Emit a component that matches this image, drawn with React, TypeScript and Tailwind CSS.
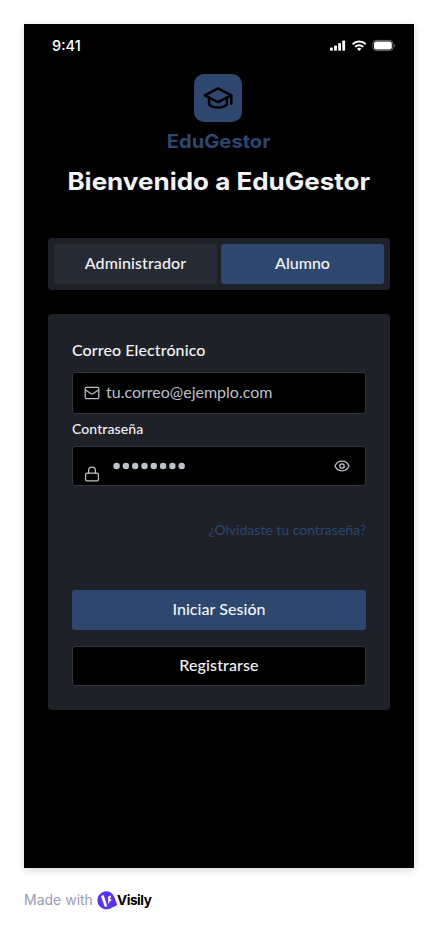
import React from "react";

function StatusIcons() {
  return (
    <svg width="68" height="14" viewBox="0 0 68 14" fill="none">
      <g fill="#fff">
        <rect x="1" y="8.4" width="2.8" height="3.3" rx="0.8" />
        <rect x="5.1" y="6.4" width="2.8" height="5.3" rx="0.8" />
        <rect x="9.2" y="4" width="2.8" height="7.7" rx="0.8" />
        <rect x="13.3" y="1.5" width="2.8" height="10.2" rx="0.8" />
      </g>
      <g stroke="#fff" strokeWidth="2">
        <path d="M23.7 5.2a9.2 9.2 0 0 1 13 0" />
        <path d="M26.2 7.9a5.7 5.7 0 0 1 8 0" />
      </g>
      <path d="M28 9.7a3.2 3.2 0 0 1 4.4 0L30.2 12z" fill="#fff" />
      <rect x="43.8" y="1.4" width="20.2" height="10.2" rx="3.4" stroke="#fff" strokeOpacity="0.4" />
      <rect x="45" y="2.6" width="17.8" height="7.8" rx="2.2" fill="#fff" />
      <path d="M65 5c1.2.5 1.2 2.7 0 3.2z" fill="#fff" fillOpacity="0.45" />
    </svg>
  );
}

function CapIcon() {
  return (
    <svg width="32" height="32" viewBox="0 0 32 32" fill="none" stroke="#000" strokeWidth="2.5" strokeLinecap="round" strokeLinejoin="round">
      <path d="M16 6.4 2.7 13.3 16 20.1l13.3-6.8z" />
      <path d="M7.1 16v6.2c3.3 4.4 14.5 4.4 17.8 0V16" />
      <path d="M29.3 13.5v8.2" />
    </svg>
  );
}

function MailIcon() {
  return (
    <svg width="16" height="16" viewBox="0 0 16 16" fill="none" stroke="#bdc1ca" strokeWidth="1.25" strokeLinecap="round" strokeLinejoin="round">
      <rect x="1.2" y="2.4" width="13.6" height="11.2" rx="1.4" />
      <path d="m1.5 5 5.7 3.7c.5.3 1.1.3 1.6 0L14.5 5" />
    </svg>
  );
}

function LockIcon() {
  return (
    <svg width="16" height="16" viewBox="0 0 16 16" fill="none" stroke="#bdc1ca" strokeWidth="1.25" strokeLinecap="round" strokeLinejoin="round">
      <rect x="1.6" y="7" width="12.8" height="7.8" rx="1.3" />
      <path d="M4.6 7V4.6a3.4 3.4 0 0 1 6.8 0V7" />
    </svg>
  );
}

function EyeIcon() {
  return (
    <svg width="16" height="16" viewBox="0 0 16 16" fill="none" stroke="#bdc1ca" strokeWidth="1.3">
      <path d="M1 8c1.4-3.2 4-4.8 7-4.8S13.6 4.8 15 8c-1.4 3.2-4 4.8-7 4.8S2.400 11.200 1 8z" strokeLinejoin="round" />
      <circle cx="8" cy="8" r="2.2" />
    </svg>
  );
}

function PasswordDots() {
  return (
    <svg width="76" height="8" viewBox="0 0 76 8" fill="#bdc1ca">
      {Array.from({ length: 8 }, (_, i) => (
        <circle key={i} cx={3.6 + i * 9.3} cy="4" r="3.2" />
      ))}
    </svg>
  );
}

function VisilyMark() {
  return (
    <svg width="20" height="19" viewBox="0 0 20 19">
      <path d="M9 .3c4 0 6.800 2 8.300 5.700L20 13.300c.2.600 0 1-.6 1.200l-5.200 2.400A9 9 0 1 1 9 .3z" fill="#5a32fa" />
      <path d="M3.900 5 6.700 4l3.600 11.600-1.700.2c-.6 0-.9-.3-1.200-.9z" fill="#fff" />
      <path d="M11 5.700 13.800 4.600l.4 1.700-1.300.8.3 1.200 1-.2v1.700l-1.500.7-1.500 3z" fill="#fff" />
    </svg>
  );
}

export default function App() {
  return (
    <div className="h-[932px] w-[438px] overflow-hidden bg-white px-6 pt-6 font-['Lato',sans-serif]">
      <main className="flex h-[844px] w-[390px] flex-col bg-black px-6 shadow-[0_2px_8px_rgba(0,0,0,0.16)]">
        <header className="flex h-11 items-center justify-between pl-1">
          <span className="pb-px font-['Inter',sans-serif] text-[14.5px] font-medium text-white">9:41</span>
          <div className="-mr-[7px]"><StatusIcons /></div>
        </header>

        <section className="flex flex-col items-center pt-1.5">
          <div className="mr-0.5 flex size-12 items-center justify-center rounded-[10px] bg-[#2e476f]"><CapIcon /></div>
          <p className="mt-[5px] mr-px scale-x-[1.09] font-['Inter',sans-serif] text-[18.5px] leading-7 font-bold whitespace-nowrap text-[#2e476f]">EduGestor</p>
          <h1 className="mt-[9px] mr-px scale-x-[1.083] font-['Inter',sans-serif] text-2xl leading-9 font-bold whitespace-nowrap text-[#f3f4f6]">Bienvenido a EduGestor</h1>
        </section>

        <nav className="mt-[38px] flex h-[52px] shrink-0 gap-1 rounded bg-[#1e2128] p-1.5 text-base font-medium text-[#f3f4f6]">
          <button className="flex-1 rounded-[3px] bg-[#262a32] pb-0.5 tracking-[0.1px]">Administrador</button>
          <button className="flex-1 rounded-[3px] bg-[#2e476f] pb-0.5">Alumno</button>
        </nav>

        <form className="mt-6 flex h-[396px] flex-col rounded bg-[#1e2128] px-6 pt-[23px] text-[#f3f4f6]">
          <label className="text-base leading-[26px] font-medium tracking-[0.1px]">Correo Electrónico</label>
          <div className="mt-[9px] flex h-[42px] items-center gap-1.5 rounded-[3px] border border-[#323642] bg-black pl-[11px] text-[#bdc1ca]">
            <MailIcon />
            <span className="pb-0.5 text-base">tu.correo@ejemplo.com</span>
          </div>
          <label className="mt-1 text-sm leading-[22px] font-medium tracking-[0.1px]">Contraseña</label>
          <div className="mt-1.5 flex h-10 rounded-[3px] border border-[#323642] bg-black pl-[11px]">
            <div className="pt-[19px]"><LockIcon /></div>
            <div className="pt-[15px] pl-[13px]"><PasswordDots /></div>
            <div className="ml-auto pt-[11px] pr-[15px]"><EyeIcon /></div>
          </div>
          <a className="mt-[33px] self-end text-sm leading-[22px] text-[#2e476f]">¿Olvidaste tu contraseña?</a>
          <button className="mt-[49px] h-10 rounded-[3px] bg-[#2e476f] pb-0.5 text-base font-medium tracking-[0.05px]">Iniciar Sesión</button>
          <button className="mt-4 h-10 rounded-[3px] border border-[#323642] bg-black pb-0.5 text-base font-medium tracking-[0.12px]">Registrarse</button>
        </form>
      </main>

      <footer className="mt-[22px] flex h-5 items-center font-['Inter',sans-serif]">
        <span className="w-[73px] pb-px text-[14px] whitespace-nowrap text-[#9d99b4]">Made with</span>
        <VisilyMark />
        <span className="text-[13.5px] font-bold tracking-[-0.4px] text-black">Visily</span>
      </footer>
    </div>
  );
}
